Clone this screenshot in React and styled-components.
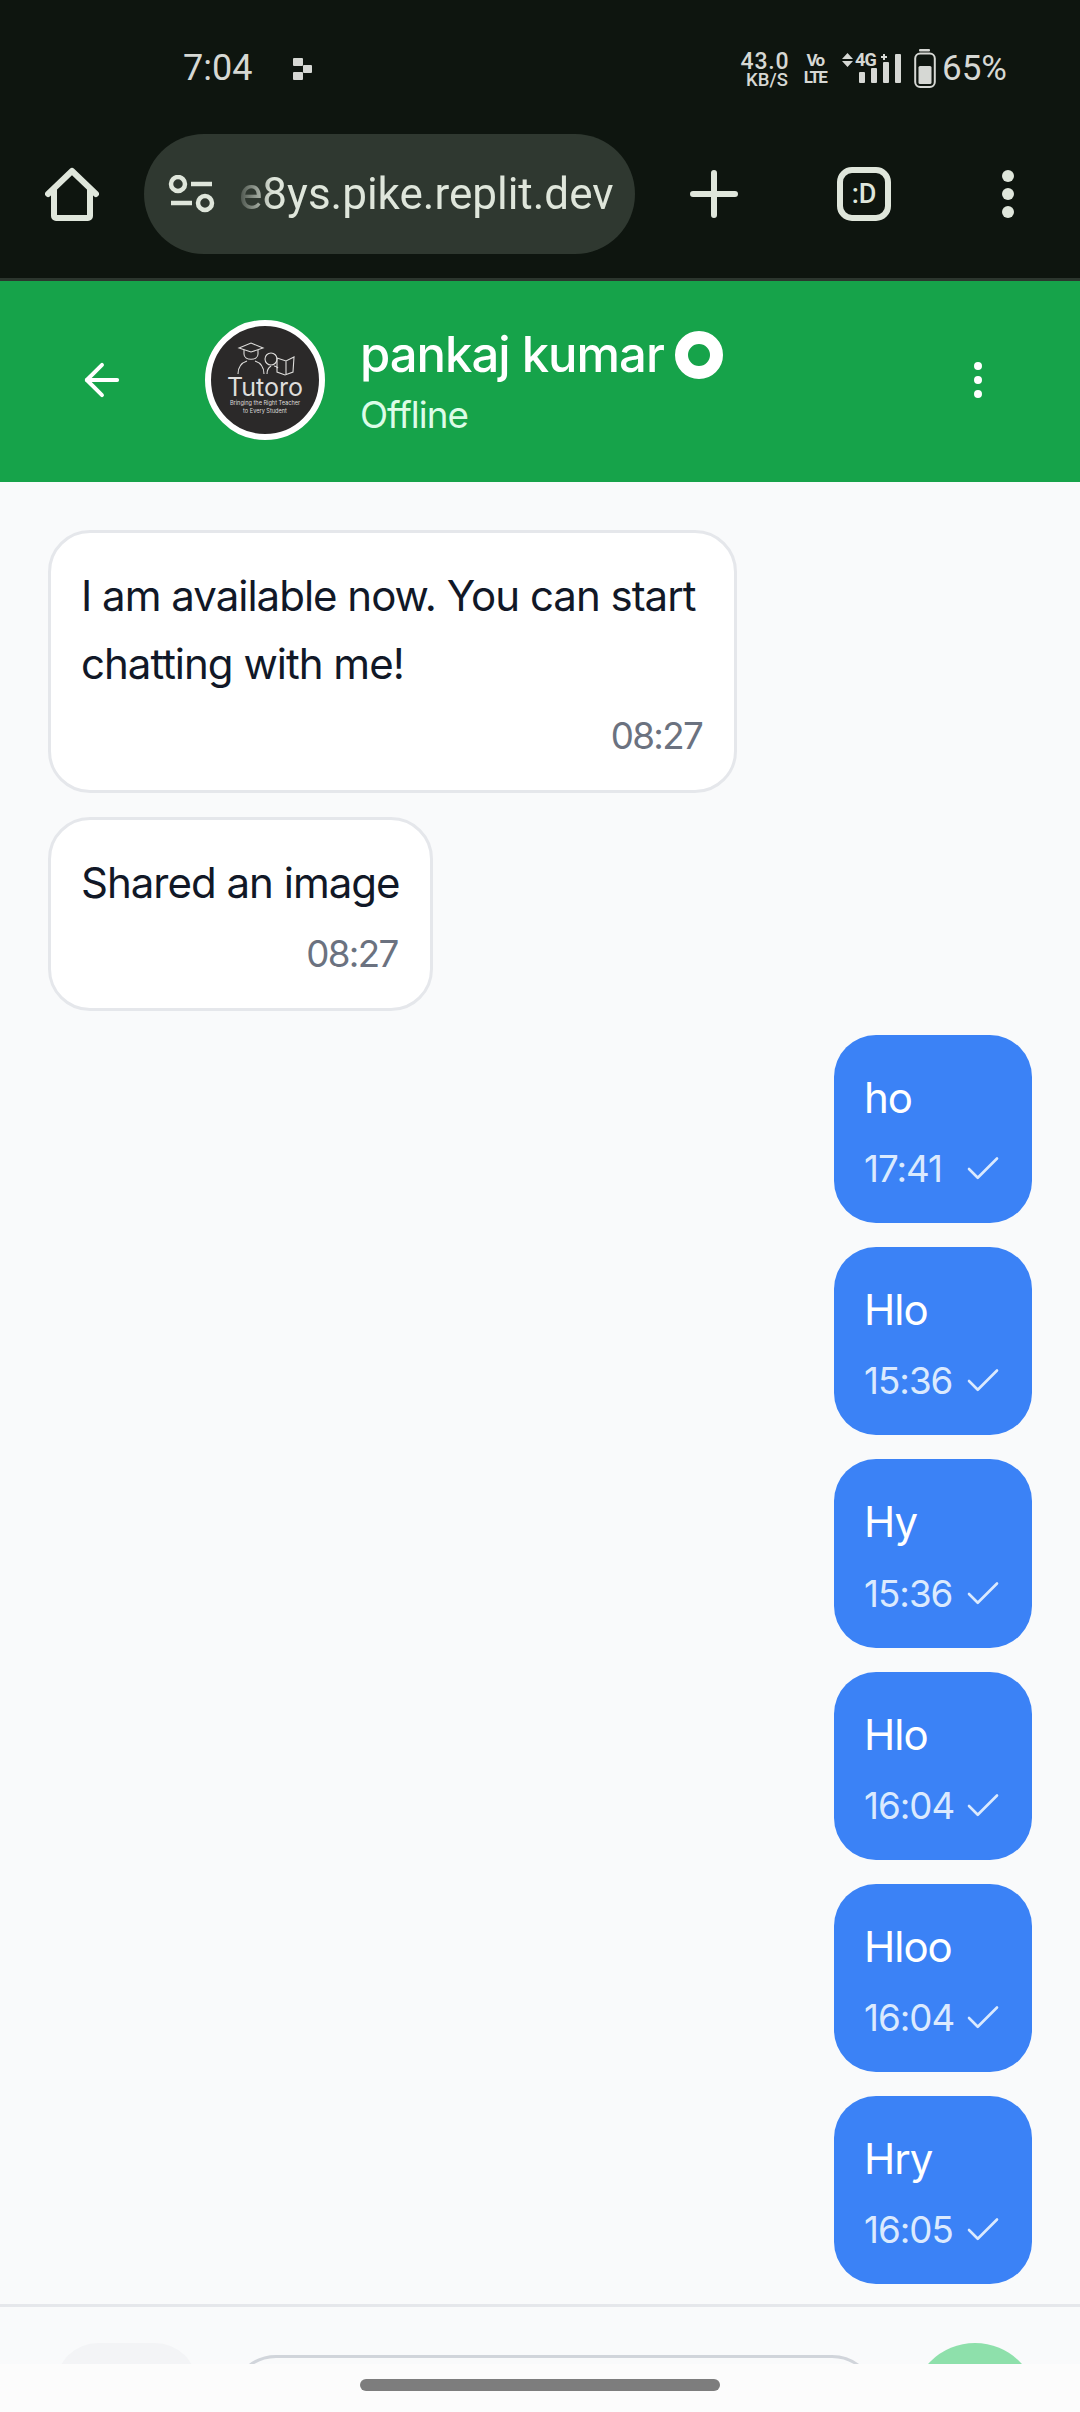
import React from "react";
import styled, { createGlobalStyle } from "styled-components";
import { ArrowLeft, Check, MoreVertical } from "lucide-react";

const GlobalStyle = createGlobalStyle`
  html, body { margin: 0; padding: 0; background: #f9fafb; }
  * { box-sizing: border-box; }
`;

const Page = styled.div`
  width: 1080px;
  height: 2412px;
  display: flex;
  flex-direction: column;
  overflow: hidden;
  background: #f9fafb;
  font-family: Inter, "Liberation Sans", sans-serif;
`;

/* phone status bar */
const StatusBar = styled.div`
  height: 134px;
  flex: none;
  display: flex;
  align-items: flex-start;
  padding: 49px 73px 0 183px;
  background: #0e150f;
  color: #d6d8d4;
  font-family: Roboto, sans-serif;
`;
const Clock = styled.span`
  font-size: 36px;
  line-height: 39px;
  font-weight: 400;
`;
const NotifyDot = styled.svg`
  width: 20px;
  height: 24px;
  margin: 9px 0 0 41px;
`;
const StatusRight = styled.div`
  margin-left: auto;
  display: flex;
  align-items: center;
  height: 39px;
`;
const NetSpeed = styled.div`
  width: 50px;
  padding-top: 3px;
  display: flex;
  flex-direction: column;
  align-items: center;
  font-weight: 500;
  span:first-child { font-size: 23px; line-height: 20px; letter-spacing: 0.8px; }
  span:last-child { font-size: 18.5px; line-height: 17px; margin-left: 4px; }
`;
const VoLte = styled.div`
  width: 24px;
  margin-left: 13px;
  display: flex;
  flex-direction: column;
  align-items: center;
  font-weight: 700;
  font-size: 17px;
  line-height: 17px;
  letter-spacing: -1.7px;
`;
const Signal = styled.div`
  position: relative;
  width: 60px;
  height: 39px;
  margin-left: 14px;
`;
const SignalLabel = styled.span`
  position: absolute;
  left: 14px;
  top: 1px;
  font-size: 18px;
  line-height: 20px;
  font-weight: 700;
  letter-spacing: -0.8px;
`;
const Battery = styled.svg`
  width: 22px;
  height: 39px;
  margin-left: 13px;
`;
const Percent = styled.span`
  margin-left: 6px;
  font-size: 35px;
  line-height: 39px;
  font-weight: 400;
`;

/* browser toolbar */
const Toolbar = styled.div`
  height: 147px;
  flex: none;
  display: flex;
  align-items: flex-start;
  background: #0e150f;
  border-bottom: 3px solid #2c362e;
`;
const ToolIcon = styled.svg`
  flex: none;
  width: ${(p) => p.$w}px;
  height: 54px;
  margin: 33px 0 0 ${(p) => p.$left}px;
`;
const UrlPill = styled.div`
  width: 491px;
  height: 120px;
  margin-left: 45px;
  flex: none;
  display: flex;
  align-items: center;
  padding-left: 24px;
  border-radius: 60px;
  background: #2f3830;
`;
const UrlText = styled.span`
  margin-left: 24px;
  color: #dfe6db;
  font-family: Roboto, sans-serif;
  font-size: 44px;
  -webkit-mask-image: linear-gradient(to right, rgba(0, 0, 0, 0.15), #000 34px);
  mask-image: linear-gradient(to right, rgba(0, 0, 0, 0.15), #000 34px);
`;
const TabCount = styled.div`
  flex: none;
  width: 54px;
  height: 54px;
  margin: 33px 0 0 99px;
  display: flex;
  align-items: center;
  justify-content: center;
  border: 6px solid #dfe6db;
  border-radius: 15px;
  color: #dfe6db;
  font-family: Roboto, sans-serif;
  font-size: 27px;
  font-weight: 500;
`;

/* chat header */
const ChatHeader = styled.header`
  height: 201px;
  flex: none;
  display: flex;
  align-items: center;
  padding: 0 78px 3px 76px;
  background: #16a34a;
  color: #fff;
`;
const Avatar = styled.div`
  flex: none;
  width: 120px;
  height: 120px;
  margin-left: 77px;
  padding-top: 14px;
  display: flex;
  flex-direction: column;
  align-items: center;
  border: 6px solid #fff;
  border-radius: 50%;
  background: #2b2929;
  color: #dedddb;
`;
const LogoArt = styled.svg`
  width: 62px;
  height: 36px;
  flex: none;
`;
const LogoName = styled.span`
  font-size: 25px;
  line-height: 22px;
  font-weight: 400;
`;
const LogoTag = styled.span`
  margin-top: 2px;
  font-size: 5.6px;
  line-height: 7.5px;
  text-align: center;
  white-space: nowrap;
`;
const HeaderText = styled.div`
  margin-left: 35px;
  padding-top: 4px;
  flex: 1;
`;
const NameRow = styled.div`
  display: flex;
  align-items: center;
  gap: 11px;
  font-size: 49px;
  line-height: 63px;
  font-weight: 500;
  letter-spacing: -1px;
`;
const StatusRing = styled.span`
  width: 48px;
  height: 48px;
  border: 13px solid #fff;
  border-radius: 50%;
`;
const Presence = styled.div`
  margin-top: 3px;
  color: #dcfce7;
  font-size: 36.75px;
  line-height: 52px;
  letter-spacing: -1px;
`;

/* messages */
const MessageList = styled.main`
  flex: 1;
  min-height: 0;
  display: flex;
  flex-direction: column;
  gap: 24px;
  padding: 48px 48px 0;
  overflow: hidden;
`;
const Bubble = styled.div`
  flex: none;
  max-width: 689px;
  padding: ${(p) => (p.$mine ? "29px 28px 28px 30px" : "29px 30px 28px")};
  align-self: ${(p) => (p.$mine ? "flex-end" : "flex-start")};
  width: ${(p) => (p.$mine ? "198px" : "fit-content")};
  border: ${(p) => (p.$mine ? "none" : "3px solid #e5e7eb")};
  border-radius: 42px;
  background: ${(p) => (p.$mine ? "#3b82f6" : "#fff")};
  color: ${(p) => (p.$mine ? "#fff" : "#111827")};
`;
const MessageText = styled.div`
  font-size: 42px;
  line-height: 68.25px;
  letter-spacing: -1px;
`;
const MetaRow = styled.div`
  display: flex;
  align-items: center;
  justify-content: ${(p) => (p.$mine ? "space-between" : "flex-end")};
  height: 52px;
  margin-top: 11px;
  padding-right: ${(p) => (p.$mine ? "0" : "2px")};
  color: ${(p) => (p.$mine ? "#dbeafe" : "#6b7280")};
  font-size: 36.75px;
  line-height: 52px;
  letter-spacing: ${(p) => (p.$mine ? "-1px" : "-1.7px")};
`;

/* composer, cut off by the gesture bar */
const Composer = styled.div`
  height: 60px;
  flex: none;
  display: flex;
  align-items: flex-start;
  padding: 36px 42px 0 56px;
  overflow: hidden;
  border-top: 3px solid #e5e7eb;
`;
const AttachButton = styled.div`
  flex: none;
  width: 141px;
  height: 126px;
  border-radius: 42px;
  background: #f3f4f6;
`;
const MessageInput = styled.div`
  flex: none;
  width: 646px;
  height: 126px;
  margin: 12px 0 0 34px;
  border: 3px solid #d1d5db;
  border-radius: 45px;
`;
const SendButton = styled.div`
  flex: none;
  width: 126px;
  height: 126px;
  margin-left: 35px;
  border-radius: 50%;
  background: #8ee0ab;
`;
const GestureBar = styled.div`
  height: 48px;
  flex: none;
  display: flex;
  justify-content: center;
  padding-top: 15px;
  background: #fcfcfc;
`;
const GesturePill = styled.div`
  width: 360px;
  height: 12px;
  border-radius: 6px;
  background: #7d7d7d;
`;

const mine = [
  ["ho", "17:41"],
  ["Hlo", "15:36"],
  ["Hy", "15:36"],
  ["Hlo", "16:04"],
  ["Hloo", "16:04"],
  ["Hry", "16:05"],
];

export default function App() {
  return (
    <Page>
      <GlobalStyle />
      <StatusBar>
        <Clock>7:04</Clock>
        <NotifyDot viewBox="0 0 20 24" fill="#d6d8d4">
          <rect x="0" y="0" width="10" height="8" rx="1" />
          <rect x="10" y="7" width="9" height="8" rx="1" />
          <rect x="0" y="14" width="10" height="8" rx="1" />
        </NotifyDot>
        <StatusRight>
          <NetSpeed>
            <span>43.0</span>
            <span>KB/S</span>
          </NetSpeed>
          <VoLte>
            <span>Vo</span>
            <span>LTE</span>
          </VoLte>
          <Signal>
            <svg width="60" height="39" viewBox="0 0 60 39" fill="#d6d8d4">
              <path d="M1 10 L6.5 4 L12 10 Z M1 12 L12 12 L6.5 18 Z" />
              <path d="M40 8h6M43 5v6" stroke="#d6d8d4" strokeWidth="2" />
              <rect x="18" y="23" width="6" height="11" rx="1" />
              <rect x="30" y="19" width="6" height="15" rx="1" />
              <rect x="42" y="13" width="6" height="21" rx="1" />
              <rect x="54" y="5" width="6" height="29" rx="1" />
            </svg>
            <SignalLabel>4G</SignalLabel>
          </Signal>
          <Battery viewBox="0 0 22 39" fill="none">
            <rect x="5" y="0" width="11" height="2.5" rx="1" fill="#d6d8d4" />
            <rect x="1.2" y="4.5" width="19.6" height="33.5" rx="5" stroke="#d6d8d4" strokeWidth="2" />
            <rect x="4.5" y="17" width="13" height="18" rx="1.5" fill="#d6d8d4" />
          </Battery>
          <Percent>65%</Percent>
        </StatusRight>
      </StatusBar>

      <Toolbar>
        <ToolIcon $w={54} $left={45} viewBox="0 0 54 54" fill="none" stroke="#dfe6db" strokeWidth="6" strokeLinecap="round" strokeLinejoin="round">
          <path d="M3 27 L27 4 L51 27" />
          <path d="M9 23 V49 a2 2 0 0 0 2 2 H43 a2 2 0 0 0 2 -2 V23" />
        </ToolIcon>
        <UrlPill>
          <svg width="47" height="38" viewBox="0 0 47 38" fill="none" stroke="#dfe6db" strokeWidth="4.5">
            <circle cx="10" cy="9" r="7" />
            <path d="M23 9 H44" />
            <path d="M3 28 H24" />
            <circle cx="37" cy="28" r="7" />
          </svg>
          <UrlText>e8ys.pike.replit.dev</UrlText>
        </UrlPill>
        <ToolIcon $w={48} $left={55} viewBox="0 0 48 54" fill="none" stroke="#dfe6db" strokeWidth="6" strokeLinecap="round">
          <path d="M24 6 V48 M3 27 H45" />
        </ToolIcon>
        <TabCount>:D</TabCount>
        <ToolIcon $w={12} $left={111} viewBox="0 0 12 54" fill="#dfe6db">
          <circle cx="6" cy="9" r="6" />
          <circle cx="6" cy="27" r="6" />
          <circle cx="6" cy="45" r="6" />
        </ToolIcon>
      </Toolbar>

      <ChatHeader>
        <ArrowLeft size={52} strokeWidth={1.8} />
        <Avatar>
          <LogoArt viewBox="0 0 62 36" fill="none" stroke="#dedddb" strokeWidth="1.1">
            <path d="M5 8 L17 3 L29 8 L17 12 Z" />
            <path d="M10 10 V14 C10 21 24 21 24 14 V10" />
            <path d="M4 34 C4 24 10 22 13 21 M30 34 C30 24 24 22 21 21" />
            <circle cx="37" cy="19" r="6" />
            <path d="M33 34 C33 28 36 27 37 26 M44 28 C42 26 41 26 40 26" />
            <path d="M43 18 L52 21 L60 17 L59 32 L51 35 L43 32 Z M52 21 V35" />
          </LogoArt>
          <LogoName>Tutoro</LogoName>
          <LogoTag>
            Bringing the Right Teacher
            <br />
            to Every Student
          </LogoTag>
        </Avatar>
        <HeaderText>
          <NameRow>
            pankaj kumar
            <StatusRing />
          </NameRow>
          <Presence>Offline</Presence>
        </HeaderText>
        <MoreVertical size={48} strokeWidth={2} />
      </ChatHeader>

      <MessageList>
        <Bubble>
          <MessageText>I am available now. You can start chatting with me!</MessageText>
          <MetaRow>08:27</MetaRow>
        </Bubble>
        <Bubble>
          <MessageText>Shared an image</MessageText>
          <MetaRow>08:27</MetaRow>
        </Bubble>
        {mine.map(([text, time], i) => (
          <Bubble $mine key={i}>
            <MessageText>{text}</MessageText>
            <MetaRow $mine>
              {time}
              <Check size={42} strokeWidth={1.5} />
            </MetaRow>
          </Bubble>
        ))}
      </MessageList>

      <Composer>
        <AttachButton />
        <MessageInput />
        <SendButton />
      </Composer>
      <GestureBar>
        <GesturePill />
      </GestureBar>
    </Page>
  );
}
